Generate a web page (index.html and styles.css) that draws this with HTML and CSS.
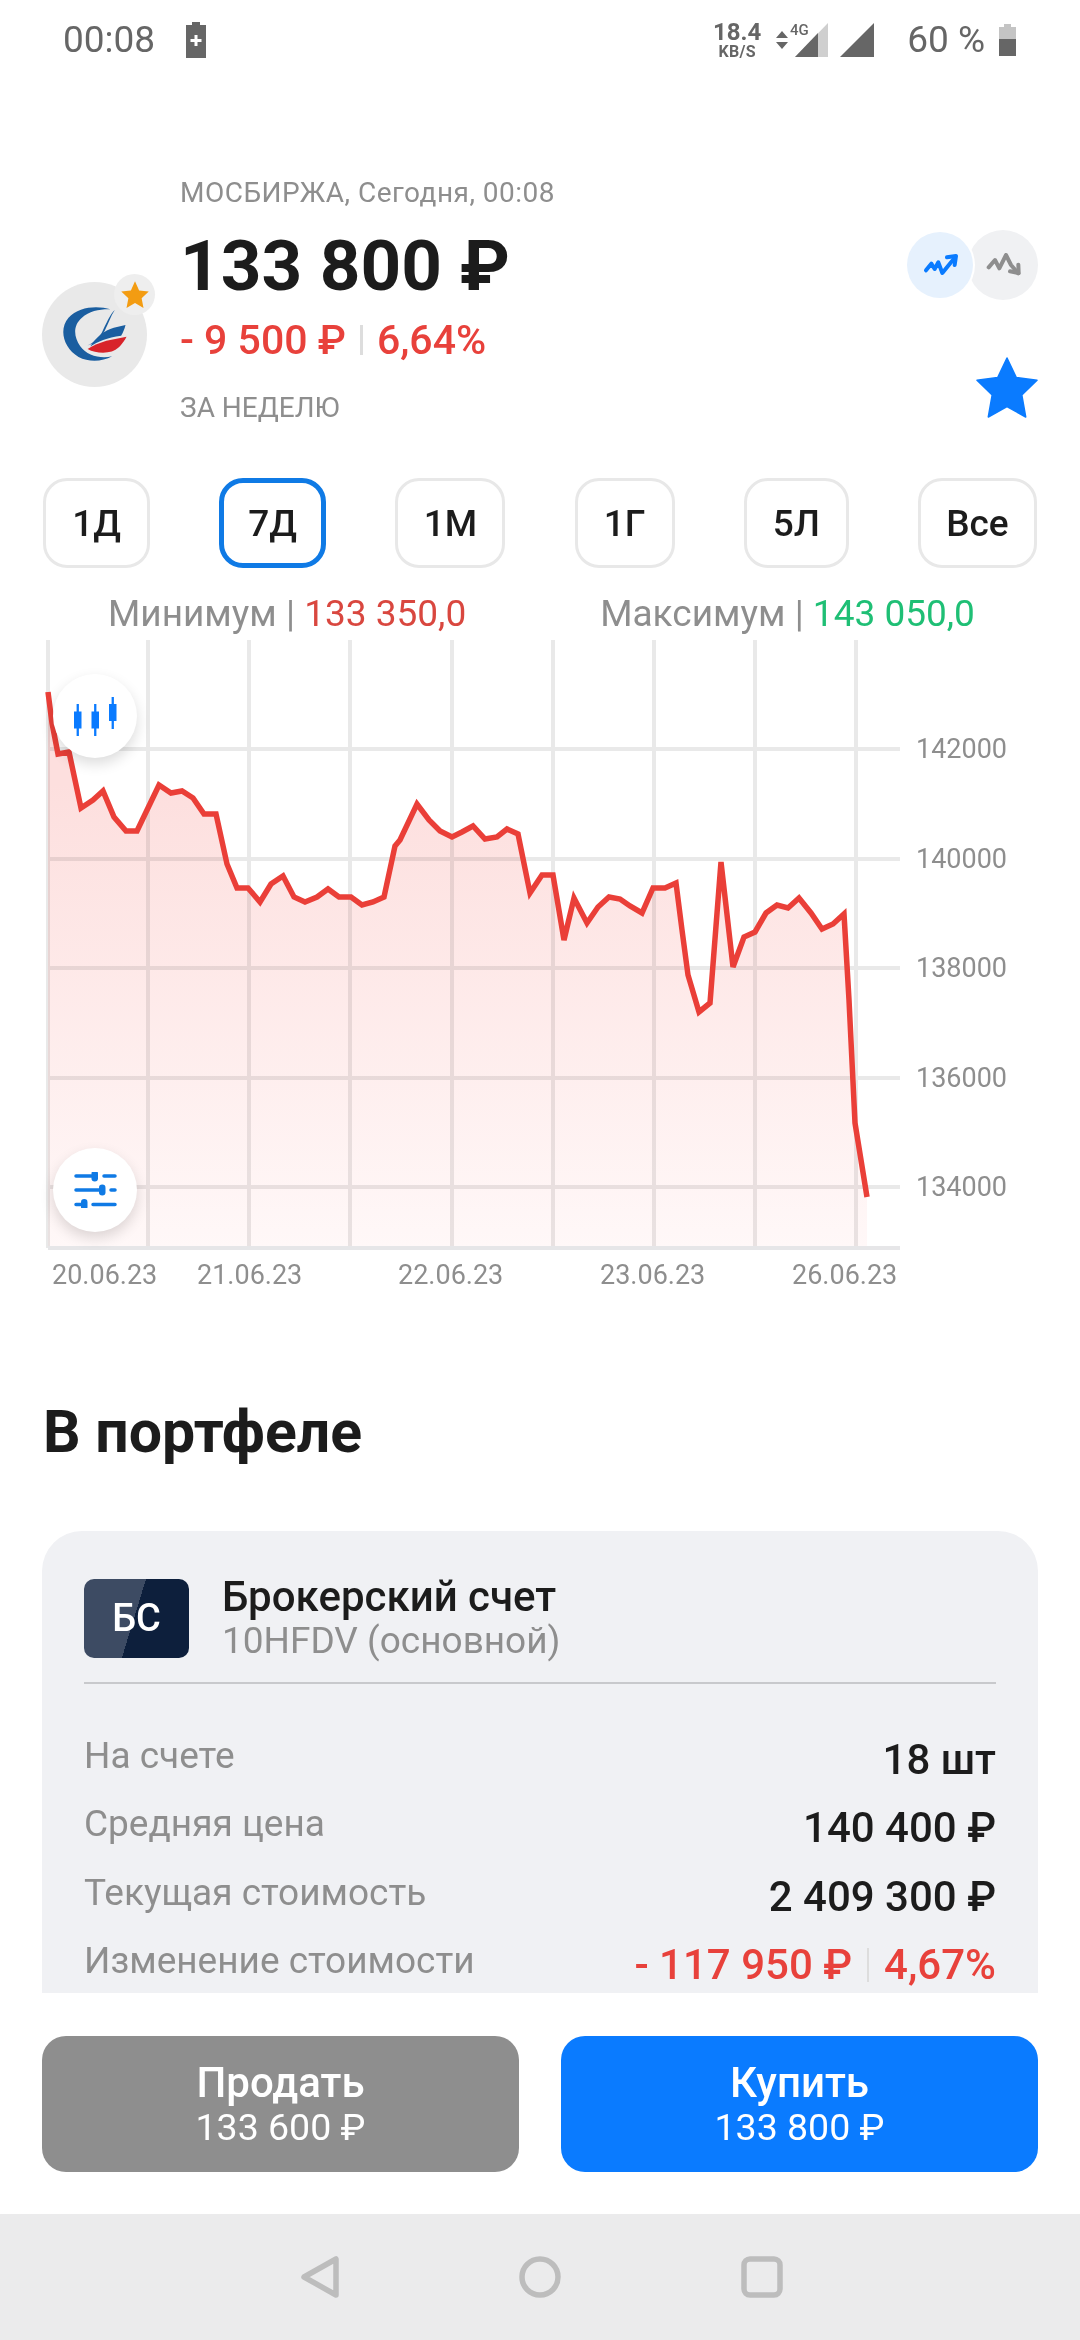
FILE: index.html
```html
<!DOCTYPE html>
<html lang="ru">
<head>
<meta charset="utf-8">
<title>Акция</title>
<link rel="stylesheet" href="styles.css">
</head>
<body>
<div class="screen">
  <header class="status">
    <div class="status-left">
      <span class="status-time">00:08</span>
      <svg class="ic-charge" width="20" height="36" viewBox="0 0 20 36"><path d="M6 0h8v3h6v33H0V3h6z" fill="#666"/><path d="M8.500 13h3v4h4v3h-4v4h-3v-4h-4v-3h4z" fill="#fff"/></svg>
    </div>
    <div class="status-right">
      <div class="speed"><span class="speed-v">18.4</span><span class="speed-u">KB/S</span></div>
      <svg class="ic-net" width="54" height="36" viewBox="0 0 54 36"><path d="M2 13l6-7 6 7zM2 17h12l-6 7z" fill="#666" transform="translate(0,3)"/><path d="M21 35L54 1v34z" fill="#cfcfcf"/><path d="M21 35l23-24v24z" fill="#666"/><text x="16" y="13" class="net-text">4G</text></svg>
      <svg class="ic-signal" width="34" height="36" viewBox="0 0 34 36"><path d="M0 35L34 1v34z" fill="#666"/></svg>
      <span class="status-pct">60 %</span>
      <svg class="ic-batt" width="17" height="32" viewBox="0 0 17 32"><path d="M5 0h7v3h5v13H0V3h5z" fill="#c4c4c4"/><path d="M0 15h17v17H0z" fill="#666"/></svg>
    </div>
  </header>

  <section class="hero">
    <div class="logo">
      <svg class="logo-mark" width="67" height="57" viewBox="190 440 195 170">
        <path d="M335 450C300 438 240 440 210 475 180 510 195 565 240 592c30 16 70 15 100-2-35 8-75-2-95-30-20-28-22-62 5-85 22-20 55-26 85-25z" fill="#1a5ea0"/>
        <path d="M348 452c-14 12-26 42-38 66-10 18-26 32-44 40 24-6 40-22 52-44 10-20 18-44 30-62z" fill="#1a5ea0"/>
        <path d="M380 497L345 505c-28 8-55 30-70 56 22-14 50-26 92-32 6-10 10-20 13-32z" fill="#1a5ea0"/>
        <path d="M383 532l-60 12c-20 6-40 14-56 24 20 12 50 14 72 8 18-6 34-24 44-44z" fill="#d8232a"/>
      </svg>
      <span class="logo-badge"><svg width="30" height="30" viewBox="0 0 24 24"><path d="M12 1l3.300 7.300 7.700.9-5.700 5.300 1.500 7.900L12 18.400l-6.800 4 1.500-7.900L1 9.200l7.700-.9z" fill="#f39c12"/></svg></span>
    </div>
    <div class="quote">
      <p class="quote-src">МОСБИРЖА, Сегодня, 00:08</p>
      <p class="quote-price">133 800 ₽</p>
      <p class="quote-change">- 9 500 ₽<i class="sep"></i>6,64%</p>
      <p class="quote-period">ЗА НЕДЕЛЮ</p>
    </div>
    <div class="hero-actions">
      <div class="trend">
        <span class="trend-up"><svg width="35" height="24" viewBox="425 165 105 70"><path d="M434 216l16-20 10 16 11-20 12 32 36-44" fill="none" stroke="#0a7bff" stroke-width="12" stroke-linecap="round" stroke-linejoin="round"/><path d="M497 177l27-4-4 27" fill="none" stroke="#0a7bff" stroke-width="12" stroke-linecap="round" stroke-linejoin="round"/></svg></span>
        <span class="trend-down"><svg width="35" height="24" viewBox="615 160 105 70"><path d="M623 202l19-22 13 25 20-40 15 30 22 25" fill="none" stroke="#8e8e8e" stroke-width="12" stroke-linecap="round" stroke-linejoin="round"/><path d="M687 214l26 5-1-25" fill="none" stroke="#8e8e8e" stroke-width="12" stroke-linecap="round" stroke-linejoin="round"/></svg></span>
      </div>
      <svg class="fav" width="62" height="62" viewBox="0 0 62 62"><path d="M31 1l9.300 19.500 20.700 2.800-15.200 14.700 3.900 22-18.700-10.500L12.300 60l3.900-22L1 23.300l20.700-2.800z" fill="#0a7bff" stroke="#0a7bff" stroke-width="1.500" stroke-linejoin="round"/></svg>
    </div>
  </section>

  <nav class="tabs">
    <button class="tab tab-1d">1Д</button>
    <button class="tab tab-7d tab-on">7Д</button>
    <button class="tab tab-1m">1М</button>
    <button class="tab tab-1g">1Г</button>
    <button class="tab tab-5l">5Л</button>
    <button class="tab tab-all">Все</button>
  </nav>

  <div class="range">
    <span>Минимум <i class="range-bar">|</i> <b class="down-min">133 350,0</b></span>
    <span>Максимум <i class="range-bar">|</i> <b class="up">143 050,0</b></span>
  </div>

  <div class="chart">
    <svg class="chart-svg" width="1080" height="660" viewBox="0 640 1080 660">
      <defs>
        <linearGradient id="area" x1="0" y1="785" x2="0" y2="1248" gradientUnits="userSpaceOnUse">
          <stop offset="0" stop-color="#fddfde"/>
          <stop offset="1" stop-color="#fff8f8"/>
        </linearGradient>
      </defs>
      <g class="grid">
        <path d="M48 640V1248M148 640V1248M249 640V1248M350 640V1248M452 640V1248M553 640V1248M654 640V1248M755 640V1248M856 640V1248"/>
        <path d="M48 749H900M48 859H900M48 968H900M48 1078H900M48 1187H900"/>
      </g>
      <path class="area" fill="url(#area)" d="M48 692 52 723 58 754 69 752 81 808 93 800 103 791 114 817 126 831 137 831 148 808 159 785 171 793 182 791 193 798 204 814 216 814 227 864 237 888 248 888 260 902 271 884 283 876 294 897 305 902 317 897 328 889 339 897 351 897 362 905 373 902 384 897 395 846 400 840 417 804 429 820 440 831 452 837 462 832 473 826 485 839 497 837 507 829 518 834 530 893 542 875 553 875 564 940 574 898 587 923 598 907 609 897 620 899 630 906 642 913 653 888 665 888 676 883 682 930 688 975 699 1012 710 1003 721 862 733 967 744 937 755 932 766 913 777 905 788 908 799 898 811 913 822 929 833 924 844 914 849 1000 855 1123 867 1197V1248H48Z"/>
      <path class="axis" d="M48 1248H900"/>
      <polyline class="line" points="48,692 52,723 58,754 69,752 81,808 93,800 103,791 114,817 126,831 137,831 148,808 159,785 171,793 182,791 193,798 204,814 216,814 227,864 237,888 248,888 260,902 271,884 283,876 294,897 305,902 317,897 328,889 339,897 351,897 362,905 373,902 384,897 395,846 400,840 417,804 429,820 440,831 452,837 462,832 473,826 485,839 497,837 507,829 518,834 530,893 542,875 553,875 564,940 574,898 587,923 598,907 609,897 620,899 630,906 642,913 653,888 665,888 676,883 682,930 688,975 699,1012 710,1003 721,862 733,967 744,937 755,932 766,913 777,905 788,908 799,898 811,913 822,929 833,924 844,914 849,1000 855,1123 867,1197"/>
      <g class="ylab">
        <text x="916" y="758">142000</text>
        <text x="916" y="868">140000</text>
        <text x="916" y="977">138000</text>
        <text x="916" y="1087">136000</text>
        <text x="916" y="1196">134000</text>
      </g>
      <g class="xlab">
        <text x="52" y="1284">20.06.23</text>
        <text x="197" y="1284">21.06.23</text>
        <text x="398" y="1284">22.06.23</text>
        <text x="600" y="1284">23.06.23</text>
        <text x="792" y="1284">26.06.23</text>
      </g>
    </svg>
    <button class="fab fab-candles">
      <svg width="44" height="41" viewBox="0 0 44 41"><g fill="#0a7bff"><rect x="1" y="15.500" width="7.500" height="17"/><rect x="3.600" y="8" width="2.300" height="32"/><rect x="18.500" y="15.500" width="7.500" height="17"/><rect x="21.100" y="8" width="2.300" height="32"/><rect x="36" y="8" width="7.500" height="17"/><rect x="38.600" y="1" width="2.300" height="32"/></g></svg>
    </button>
    <button class="fab fab-filter">
      <svg width="44" height="36" viewBox="0 0 44 36"><g stroke="#0f7ae5" stroke-width="3.500" stroke-linecap="round"><path d="M3 4h16M31 4h11M3 18h24M38 18h4M3 32.500h6M20 32.500h22"/></g><g fill="#0f7ae5"><rect x="18.500" y="-1.500" width="6.500" height="11" rx="3.200"/><rect x="26" y="12.500" width="6.500" height="11" rx="3.200"/><rect x="8" y="27" width="6.500" height="11" rx="3.200"/></g></svg>
    </button>
  </div>

  <h2 class="section-title">В портфеле</h2>

  <section class="card">
    <div class="acc">
      <span class="acc-badge">БС</span>
      <div class="acc-text">
        <span class="acc-name">Брокерский счет</span>
        <span class="acc-sub">10HFDV (основной)</span>
      </div>
    </div>
    <dl class="rows">
      <div class="row"><dt>На счете</dt><dd>18 шт</dd></div>
      <div class="row"><dt>Средняя цена</dt><dd>140 400 ₽</dd></div>
      <div class="row"><dt>Текущая стоимость</dt><dd>2 409 300 ₽</dd></div>
      <div class="row"><dt>Изменение стоимости</dt><dd class="down">- 117 950 ₽<i class="sep sep-sm"></i>4,67%</dd></div>
    </dl>
  </section>

  <div class="actions">
    <button class="btn btn-sell"><span class="btn-t">Продать</span><span class="btn-p">133 600 ₽</span></button>
    <button class="btn btn-buy"><span class="btn-t">Купить</span><span class="btn-p">133 800 ₽</span></button>
  </div>

  <footer class="navbar">
    <svg width="40" height="44" viewBox="0 0 40 44"><path d="M36 4v36L4 22z" fill="none" stroke="#bdbdbd" stroke-width="5.500" stroke-linejoin="round"/></svg>
    <svg width="44" height="44" viewBox="0 0 44 44"><circle cx="22" cy="22" r="18" fill="none" stroke="#bdbdbd" stroke-width="5.500"/></svg>
    <svg width="44" height="44" viewBox="0 0 44 44"><rect x="4" y="4" width="36" height="36" rx="6" fill="none" stroke="#bdbdbd" stroke-width="5.500"/></svg>
  </footer>
</div>
</body>
</html>
```
FILE: styles.css
```css
* { box-sizing: border-box; }
html, body { margin: 0; padding: 0; background: #fff; }
body { font-family: Roboto, "Liberation Sans", sans-serif; color: #1c1c1c; }
p, h2, dl, dd { margin: 0; }
i { font-style: normal; }
button { font-family: inherit; border: 0; padding: 0; background: none; }

.screen { width: 1080px; height: 2340px; display: flex; flex-direction: column; overflow: hidden; }

.status { height: 80px; flex: none; display: flex; justify-content: space-between; align-items: flex-start; padding: 20px 64px 0 63px; color: #666; }
.status-left { display: flex; align-items: center; gap: 31px; height: 40px; }
.status-time, .status-pct { font-size: 37px; line-height: 40px; }
.status-right { display: flex; align-items: center; height: 40px; }
.speed { display: flex; flex-direction: column; align-items: center; width: 48px; margin-right: 13px; font-weight: 700; line-height: 1; }
.speed-v { font-size: 24px; }
.speed-u { font-size: 16px; letter-spacing: .3px; }
.net-text { font: 500 15px Roboto, sans-serif; fill: #666; }
.ic-signal { margin-left: 12px; }
.status-pct { margin-left: 33px; margin-right: 14px; }

.hero { height: 372px; flex: none; padding: 97px 42px 0 42px; display: flex; position: relative; }
.logo { width: 105px; height: 105px; border-radius: 50%; background: #e9e9e9; margin-top: 105px; position: relative; display: flex; align-items: center; justify-content: center; flex: none; }
.logo-badge { position: absolute; left: 72px; top: -8px; width: 41px; height: 41px; border-radius: 50%; background: #eeeeee; display: flex; align-items: center; justify-content: center; }
.quote { margin-left: 33px; flex: 1; }
.quote-src, .quote-period { font-size: 28px; line-height: 32px; color: #8e8e8e; }
.quote-src { letter-spacing: .5px; }
.quote-price { font-size: 71px; font-weight: 700; line-height: 80px; margin-top: 17px; }
.quote-change { font-size: 41px; font-weight: 500; line-height: 44px; color: #e8413b; display: flex; align-items: center; margin-top: 12px; }
.quote-period { margin-top: 30px; }
.sep { display: inline-block; width: 3px; height: 30px; background: #dddddd; margin: 0 14px; }
.sep-sm { width: 2px; height: 34px; margin: 0 15px; }
.hero-actions { width: 131px; flex: none; display: flex; flex-direction: column; align-items: flex-end; padding-top: 53px; }
.trend { display: flex; align-items: center; width: 131px; position: relative; height: 70px; }
.trend-up { width: 66px; height: 66px; border-radius: 50%; background: #e6f1fd; display: flex; align-items: center; justify-content: center; position: relative; z-index: 1; box-shadow: 0 0 0 2px #fff; }
.trend-down { width: 70px; height: 70px; border-radius: 50%; background: #f0f1f3; display: flex; align-items: center; justify-content: center; margin-left: -5px; }
.fav { margin-top: 57px; }

.tabs { flex: none; display: flex; justify-content: space-between; padding: 26px 43px 0; height: 116px; }
.tab { height: 90px; border: 3px solid #e8e8e8; border-radius: 24px; background: #fff; font-size: 37px; font-weight: 500; color: #1c1c1c; }
.tab-1d { width: 107px; }
.tab-7d { width: 107px; }
.tab-1m { width: 110px; }
.tab-1g { width: 100px; }
.tab-5l { width: 105px; }
.tab-all { width: 119px; }
.tab-on { border: 5px solid #0f7ae5; }

.range { flex: none; display: flex; height: 72px; padding: 22px 0 0 108px; font-size: 37px; line-height: 48px; color: #8e8e8e; }
.range span:last-child { margin-left: 134px; }
.range b { font-weight: 400; }
.range-bar { color: #8e8e8e; }
.down { color: #e8413b; }
.down-min { color: #d9473f; }
.up { color: #1fbf75; }

.chart { flex: none; position: relative; width: 1080px; height: 660px; }
.chart-svg { display: block; width: 1080px; height: 660px; }
.grid path { fill: none; stroke: #e9e9e9; stroke-width: 4; }
.axis { fill: none; stroke: #e6e6e8; stroke-width: 4; }
.area { mix-blend-mode: multiply; }
.line { fill: none; stroke: #ea3f38; stroke-width: 5.500; stroke-linejoin: miter; }
.ylab text, .xlab text { font-family: Roboto, sans-serif; font-size: 27px; fill: #8e8e8e; }
.fab { position: absolute; left: 53px; width: 84px; height: 84px; border-radius: 50%; background: #fff; box-shadow: 0 6px 14px rgba(0,0,0,.14); display: flex; align-items: center; justify-content: center; }
.fab-candles { top: 34px; }
.fab-filter { top: 508px; }

.section-title { flex: none; font-size: 59px; font-weight: 700; line-height: 60px; padding: 102px 0 0 43px; height: 231px; }

.card { flex: none; height: 462px; margin: 0 42px; padding: 48px 42px 0; background: #f0f1f4; border-radius: 40px 40px 0 0; overflow: hidden; }
.acc { display: flex; align-items: center; gap: 33px; height: 105px; border-bottom: 2px solid #c8c9cc; padding-bottom: 25px; }
.acc-badge { width: 105px; height: 79px; border-radius: 10px; background: linear-gradient(107deg, #3d4b63 0 48%, #0d1f3c 48% 100%); color: #fff; font-size: 38px; font-weight: 500; display: flex; align-items: center; justify-content: center; flex: none; }
.acc-text { display: flex; flex-direction: column; line-height: 44px; padding-top: 2px; }
.acc-name { font-weight: 500; font-size: 42px; }
.acc-sub { color: #8e8e8e; font-size: 37px; }
.rows { padding-top: 37px; }
.row { display: flex; justify-content: space-between; align-items: center; height: 68.500px; font-size: 37px; color: #8e8e8e; }
.row dd { font-size: 42px; font-weight: 500; color: #1c1c1c; display: flex; align-items: center; padding-top: 8px; }
.row dd.down { color: #e8413b; }

.actions { flex: none; display: flex; gap: 42px; padding: 43px 42px 0; height: 221px; }
.btn { flex: 1; height: 136px; padding-top: 2px; border-radius: 24px; color: #fff; display: flex; flex-direction: column; align-items: center; justify-content: center; }
.btn-sell { background: #8e8e8e; }
.btn-buy { background: #0a7bff; }
.btn-t { font-size: 42px; font-weight: 500; line-height: 44px; }
.btn-p { font-size: 37.500px; line-height: 44px; }

.navbar { flex: 1; background: #ebebec; display: flex; justify-content: center; align-items: center; gap: 178px; padding-left: 4px; }
```
